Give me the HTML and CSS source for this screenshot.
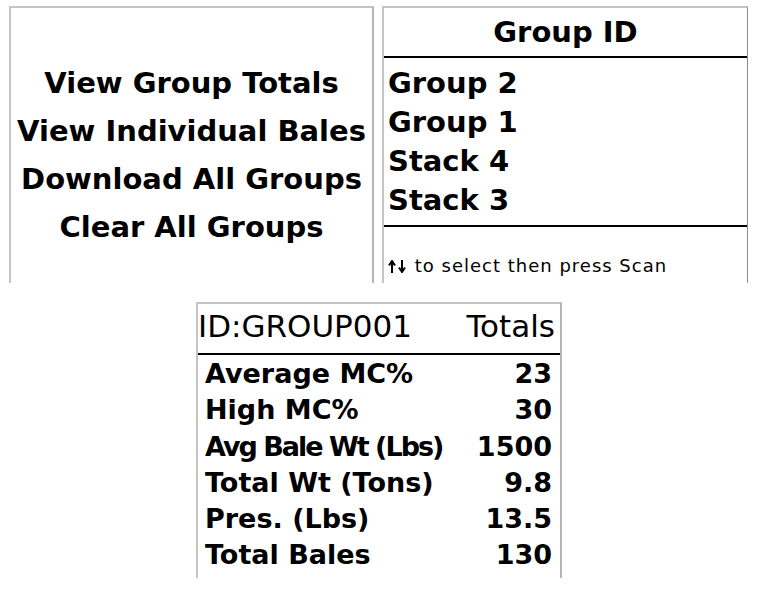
FILE: index.html
```html
<!DOCTYPE html>
<html lang="en">
<head>
<meta charset="utf-8">
<title>Bale Groups</title>
<link rel="stylesheet" href="styles.css">
</head>
<body>
<div class="top">
  <section class="panel menu">
    <p class="menu-item">View Group Totals</p>
    <p class="menu-item">View Individual Bales</p>
    <p class="menu-item">Download All Groups</p>
    <p class="menu-item">Clear All Groups</p>
  </section>
  <section class="panel groups">
    <div class="g-head">Group ID</div>
    <ul class="g-list">
      <li>Group 2</li>
      <li>Group 1</li>
      <li>Stack 4</li>
      <li>Stack 3</li>
    </ul>
    <div class="g-foot"><svg class="arrows" width="20" height="13" viewBox="0 0 20 13"><path d="M4 2.5V13M1 5.5L4 1L7 5.5" fill="none" stroke="#000" stroke-width="2"/><path d="M14 0V10.5M11 7.5L14 12L17 7.5" fill="none" stroke="#000" stroke-width="2"/></svg> to select then press Scan</div>
  </section>
</div>
<section class="panel totals">
  <div class="t-head"><span>ID:GROUP001</span><span>Totals</span></div>
  <div class="t-rows">
    <div class="t-row"><span>Average MC%</span><span>23</span></div>
    <div class="t-row"><span>High MC%</span><span>30</span></div>
    <div class="t-row"><span class="narrow">Avg Bale Wt (Lbs)</span><span>1500</span></div>
    <div class="t-row"><span>Total Wt (Tons)</span><span>9.8</span></div>
    <div class="t-row"><span>Pres. (Lbs)</span><span>13.5</span></div>
    <div class="t-row"><span>Total Bales</span><span>130</span></div>
  </div>
</section>
</body>
</html>
```
FILE: styles.css
```css
* { box-sizing: border-box; }
html, body { margin: 0; padding: 0; background: #fff; }
body {
  width: 775px;
  height: 589px;
  overflow: hidden;
  font-family: "DejaVu Sans", "Liberation Sans", sans-serif;
  color: #000;
}
.top {
  display: flex;
  gap: 8px;
  padding: 6px 0 0 9px;
}
.panel {
  background: #fff;
  border-top: 2px solid #c4c4c4;
  border-left: 2px solid #c4c4c4;
  border-right: 2px solid #b4b4b4;
}
.menu {
  width: 365px;
  height: 277px;
  padding-top: 51px;
  text-align: center;
}
.menu-item {
  margin: 0;
  font-size: 29px;
  font-weight: bold;
  line-height: 48px;
  white-space: nowrap;
}
.groups {
  width: 366px;
  height: 277px;
  border-right: 1px solid #8c8c8c;
  display: flex;
  flex-direction: column;
}
.g-head {
  height: 50px;
  border-bottom: 2px solid #000;
  font-size: 29px;
  font-weight: bold;
  line-height: 48px;
  text-align: center;
}
.g-list {
  list-style: none;
  margin: 0;
  padding: 6px 0 5px 4px;
  border-bottom: 2px solid #000;
}
.g-list li {
  font-size: 29px;
  font-weight: bold;
  line-height: 39px;
  white-space: nowrap;
}
.g-foot {
  padding: 28px 0 0 4px;
  font-size: 18px;
  line-height: 22px;
  letter-spacing: 1px;
  white-space: nowrap;
}
.arrows {
  vertical-align: -1px;
}
.totals {
  width: 366px;
  height: 276px;
  margin: 19px 0 0 196px;
}
.t-head {
  display: flex;
  justify-content: space-between;
  height: 51px;
  padding: 0 5px 0 0;
  border-bottom: 2px solid #000;
  font-size: 31px;
  line-height: 44px;
  white-space: nowrap;
}
.t-rows {
  padding: 1px 8px 0 7px;
}
.t-row {
  display: flex;
  justify-content: space-between;
  font-size: 27px;
  font-weight: bold;
  line-height: 36.3px;
  white-space: nowrap;
}
.narrow {
  letter-spacing: -2px;
}
```
